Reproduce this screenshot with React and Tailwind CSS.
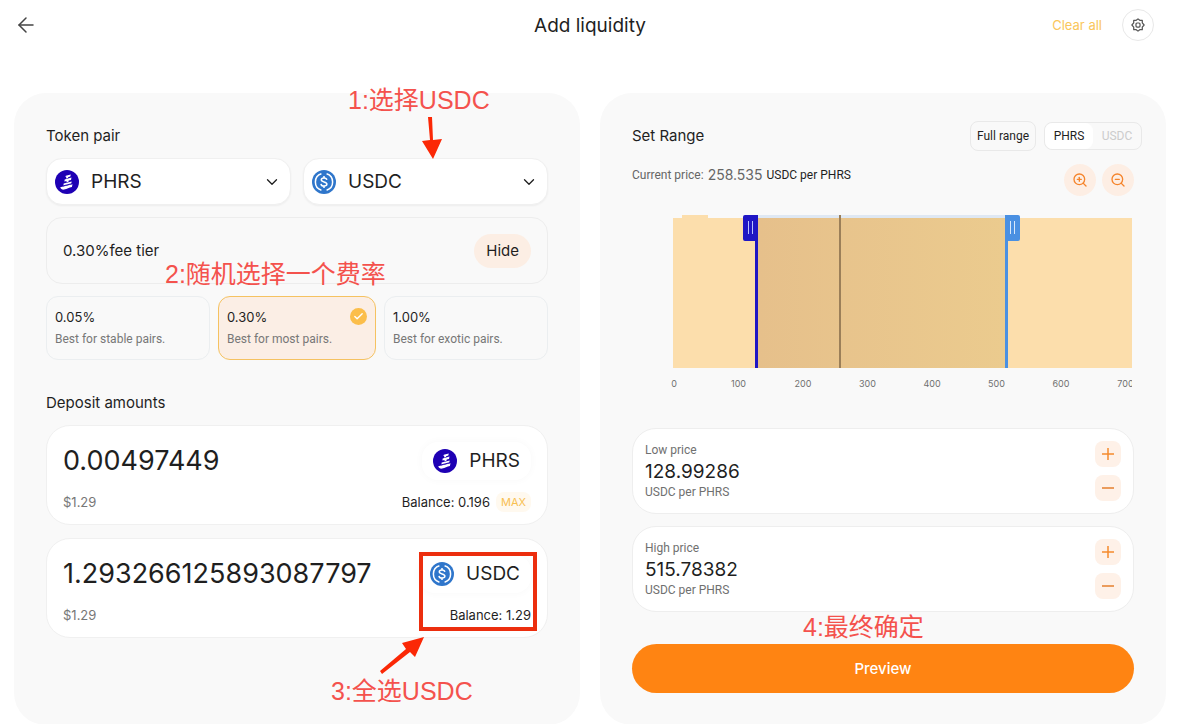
import { useState } from "react";
import { ArrowLeft, Check, ChevronDown, ZoomIn, ZoomOut } from "lucide-react";

const FEES = [
  { value: "0.05%", desc: "Best for stable pairs." },
  { value: "0.30%", desc: "Best for most pairs." },
  { value: "1.00%", desc: "Best for exotic pairs." },
];

const TICKS = [0, 100, 200, 300, 400, 500, 600, 700];

const PhrsIcon = () => (
  <svg viewBox="0 0 24 24" className="size-6 shrink-0" aria-hidden="true">
    <circle cx="12" cy="12" r="12" fill="#1e00b4" />
    <g fill="#fff">
      <path d="M10.800 5.700l5-1.300-.5 2.200-2.200.6-.1.900-2 .5.300-1.800-.9.200z" />
      <path d="M9.700 9.400l6.800-1.800-.5 2.300-2.300.6-.2 1.300-2.100.5.200-1.200-2.200.5z" />
      <path d="M8.700 13.500l8-2-.5 2.400-7.900 2z" />
      <path d="M5.200 17.200l12.300-3-.6 2.800c-2.800.2-4.800 2-7.800 2.600-1.700.3-3.400-.6-3.900-2.400z" />
    </g>
    <path d="M8 15.900l9.500-2.400" stroke="#1e00b4" strokeWidth="0.900" />
  </svg>
);

const UsdcIcon = () => (
  <svg viewBox="0 0 24 24" className="size-6 shrink-0" aria-hidden="true">
    <circle cx="12" cy="12" r="12" fill="#2f76cb" />
    <g fill="none" stroke="#fff" strokeWidth="1.5">
      <path d="M9.400 3.800a8.600 8.600 0 0 0 0 16.400" />
      <path d="M14.600 3.800a8.600 8.600 0 0 1 0 16.400" />
      <path d="M14.800 9.900c-.1-1.300-1.200-2-2.800-2s-2.700.7-2.700 1.900c0 2.900 5.600 1.300 5.600 4.300 0 1.300-1.200 2-2.900 2s-2.900-.8-3-2.200" />
      <path d="M12 6v2M12 16v2" />
    </g>
  </svg>
);

const GearIcon = () => (
  <svg viewBox="0 0 16 16" className="size-3.5" fill="none" stroke="#555" strokeWidth="1.400" strokeLinejoin="round" aria-hidden="true">
    <path d="M8 1l2 1.600h2.900v2.900L15 8l-2.100 2.500v2.900H10L8 15l-2-1.600H3.100v-2.900L1 8l2.100-2.500V2.600H6z" />
    <rect x="5.700" y="5.700" width="4.600" height="4.600" rx="1.200" />
  </svg>
);

const TokenIcon = ({ token }) => (token === "PHRS" ? <PhrsIcon /> : <UsdcIcon />);

const TokenSelect = ({ label, initial }) => {
  const [token, setToken] = useState(initial);

  return (
    <div className="relative flex h-[47px] flex-1 items-center rounded-2xl border border-[#f0f0f0] bg-white pl-2 shadow-xs">
      <TokenIcon token={token} />
      <select
        aria-label={label}
        value={token}
        onChange={(e) => setToken(e.target.value)}
        className="h-full min-w-0 flex-1 appearance-none bg-transparent pt-0.5 pl-3 text-[19px] outline-none"
      >
        <option>PHRS</option>
        <option>USDC</option>
      </select>
      <ChevronDown size={18} strokeWidth={1.75} className="pointer-events-none absolute right-[9px]" />
    </div>
  );
};

const DepositCard = ({ token, initial, balance, max }) => {
  const [amount, setAmount] = useState(initial);

  return (
    <div className="flex h-[100px] flex-col justify-between rounded-3xl border border-[#f0f0f0] bg-white px-4 pt-4 pb-3">
      <div className="flex items-center justify-between">
        <input
          aria-label={`${token} amount`}
          value={amount}
          onChange={(e) => setAmount(e.target.value)}
          className="min-w-0 flex-1 bg-transparent text-[27px] leading-9 outline-none"
        />
        <button className="flex h-[38px] items-center gap-3 rounded-2xl px-[11px] text-[19px] shadow-[0_0_8px_rgba(0,0,0,0.03)]">
          <TokenIcon token={token} />
          {token}
        </button>
      </div>
      <div className="flex items-center justify-between text-[13px] leading-5">
        <span className="text-[#777]">$1.29</span>
        <div className="flex items-center gap-1.5">
          <span>Balance: {balance}</span>
          {max && <button className="rounded-lg bg-[#fff9ef] px-[5px] text-[11px] text-[#f8c052]">MAX</button>}
        </div>
      </div>
    </div>
  );
};

const PriceCard = ({ label, initial }) => {
  const [price, setPrice] = useState(initial);
  const step = (d) => setPrice((p) => (Number(p) + d).toFixed(5));

  return (
    <div className="flex h-[86px] items-center justify-between rounded-3xl border border-[#eee] bg-white px-3">
      <div className="flex flex-1 flex-col pb-[3px] font-['Roboto',sans-serif] text-xs text-[#707070]">
        <label htmlFor={label}>{label}</label>
        <input
          id={label}
          value={price}
          onChange={(e) => setPrice(e.target.value)}
          className="w-full bg-transparent font-['Inter',sans-serif] text-[19px] leading-7 text-[#1f1f1f] outline-none"
        />
        <span className="leading-3">USDC per PHRS</span>
      </div>
      <div className="flex flex-col gap-2">
        <button aria-label={`Increase ${label}`} onClick={() => step(1)} className="flex size-[26px] items-center justify-center rounded-lg bg-[#fef1e8]">
          <svg viewBox="0 0 12 12" className="size-3" stroke="#f58a2c" strokeWidth="1.500"><path d="M0 6h12M6 0v12" /></svg>
        </button>
        <button aria-label={`Decrease ${label}`} onClick={() => step(-1)} className="flex size-[26px] items-center justify-center rounded-lg bg-[#fef1e8]">
          <svg viewBox="0 0 12 12" className="size-3" stroke="#eb9c5c" strokeWidth="2"><path d="M0 6h12" /></svg>
        </button>
      </div>
    </div>
  );
};

const RangeChart = () => (
  <svg viewBox="0 0 502 184" className="w-full" role="img" aria-label="Liquidity range">
    <defs>
      <linearGradient id="range">
        <stop offset="0" stopColor="#e6c08b" />
        <stop offset="1" stopColor="#ebcb8e" />
      </linearGradient>
      <clipPath id="plot">
        <rect x="0" y="0" width="500" height="184" />
      </clipPath>
    </defs>
    <rect x="41" y="10" width="459" height="150" fill="#fcdeac" />
    <rect x="50" y="7" width="26" height="3" fill="#fcdeac" />
    <rect x="126" y="7" width="248" height="4" fill="#dfe8f3" />
    <rect x="126" y="10" width="248" height="150" fill="url(#range)" />
    <rect x="207" y="7" width="2" height="153" fill="#9b7f59" />
    <path d="M126 160h-3V33h-10a2 2 0 0 1-2-2V9a2 2 0 0 1 2-2h13z" fill="#1f16c4" />
    <path d="M116.500 13v13M120.500 13v13" stroke="#b9c0ff" strokeWidth="1" />
    <path d="M373 160h3V33h10a2 2 0 0 0 2-2V9a2 2 0 0 0-2-2h-13z" fill="#4a90e2" />
    <path d="M378.500 13v13M382.500 13v13" stroke="#d8e8fb" strokeWidth="1" />
    <g clipPath="url(#plot)" fill="#707070" fontSize="9" textAnchor="middle">
      {TICKS.map((tick, i) => (
        <text key={tick} x={42 + i * 64.5} y="179">{tick}</text>
      ))}
    </g>
  </svg>
);

// Red tutorial notes drawn above the form
const Note = ({ className, children }) => (
  <span className={`pointer-events-none absolute z-10 font-['Liberation_Sans','Noto_Sans_CJK_SC',sans-serif] text-[25px] leading-7 whitespace-nowrap text-[#f4524d] ${className}`}>
    {children}
  </span>
);

const App = () => {
  const [fee, setFee] = useState("0.30%");
  const [base, setBase] = useState("PHRS");

  return (
    <main className="bg-white pr-9 pl-3.5 font-['Inter',sans-serif] text-[#1f1f1f]">
      <header className="grid h-[50px] grid-cols-[1fr_auto_1fr] items-center">
        <button aria-label="Back" className="w-6 text-[#444]">
          <ArrowLeft size={24} strokeWidth={1.5} />
        </button>
        <h1 className="pt-0.5 text-[19px]">Add liquidity</h1>
        <div className="mr-3 flex items-center justify-end gap-5">
          <button className="pt-0.5 text-[13px] text-[#fac65b]">Clear all</button>
          <button aria-label="Settings" className="flex size-8 items-center justify-center rounded-full border border-[#e8e8e8]">
            <GearIcon />
          </button>
        </div>
      </header>

      <div className="mt-[43px] grid grid-cols-2 gap-5">
        <section className="relative rounded-[32px] bg-[#f9f9f9] px-8 pt-[31px]">
          <h2 className="text-[15px] leading-6">Token pair</h2>
          <div className="mt-2.5 flex gap-3">
            <TokenSelect label="First token" initial="PHRS" />
            <TokenSelect label="Second token" initial="USDC" />
          </div>

          <div className="mt-3 flex h-[67px] items-center justify-between rounded-2xl border border-[#ededed] px-4">
            <span className="pt-0.5 text-[15px]">{fee}fee tier</span>
            <button className="h-[34px] rounded-full bg-[#fceee4] px-3 pt-0.5 text-[15px]">Hide</button>
          </div>

          <div className="mt-3 grid grid-cols-[1fr_158px_1fr] gap-2">
            {FEES.map((item) => (
              <button
                key={item.value}
                onClick={() => setFee(item.value)}
                className={`relative flex h-16 flex-col justify-center gap-1 rounded-xl border px-2 pb-0.5 text-left ${
                  fee === item.value ? "border-[#f5c261] bg-[#fbeee5]" : "border-[#ebeef0]"
                }`}
              >
                <span className="text-[13px] leading-5">{item.value}</span>
                <span className="font-['Roboto',sans-serif] text-xs text-[#777]">{item.desc}</span>
                {fee === item.value && (
                  <span className="absolute top-[11px] right-2 flex size-[17px] items-center justify-center rounded-full bg-[#fbbe4b] text-white">
                    <Check size={11} strokeWidth={3} />
                  </span>
                )}
              </button>
            ))}
          </div>

          <h2 className="mt-[31px] text-[15px] leading-6">Deposit amounts</h2>
          <div className="mt-2.5 flex flex-col gap-[13px]">
            <DepositCard token="PHRS" initial="0.00497449" balance="0.196" max />
            <DepositCard token="USDC" initial="1.293266125893087797" balance="1.29" />
          </div>

          <Note className="top-[-7px] left-[334px]">1:选择USDC</Note>
          <Note className="top-[167px] left-[151px]">2:随机选择一个费率</Note>
          <Note className="top-[584px] left-[317px]">3:全选USDC</Note>
          <svg viewBox="0 0 20 42" className="pointer-events-none absolute top-6 left-[408px] h-[42px] w-5" aria-hidden="true">
            <path d="M6 0h4l1 23 9-1-9 20L0 24l8-1z" fill="#fb2806" />
          </svg>
          <svg viewBox="0 0 44 37" className="pointer-events-none absolute top-[544px] left-[366px] h-[37px] w-11" aria-hidden="true">
            <path d="M0 34L26 12l-4-6L44 0 35 20l-5-5L2 37z" fill="#fb2806" />
          </svg>
          <span className="pointer-events-none absolute top-[459px] right-[43px] h-[79px] w-[118px] border-4 border-[#ec2e0e]" />
        </section>

        <section className="relative rounded-[32px] bg-[#f9f9f9] px-8 pt-7 pb-8">
          <div className="-mr-2 flex h-[30px] items-center gap-2 font-['Roboto',sans-serif] text-xs">
            <h2 className="mr-auto font-['Inter',sans-serif] text-[15px]">Set Range</h2>
            <button className="h-[30px] rounded-lg border border-[#e9e9e9] px-1.5">Full range</button>
            <div className="flex h-7 w-[98px] rounded-lg border border-[#e9e9e9]">
              {["PHRS", "USDC"].map((token) => (
                <button
                  key={token}
                  onClick={() => setBase(token)}
                  className={`flex-1 rounded-lg ${base === token ? "bg-white" : "text-[#ccc]"}`}
                >
                  {token}
                </button>
              ))}
            </div>
          </div>

          <div className="mt-3 flex items-start justify-between">
            <p className="flex items-center gap-1 font-['Roboto',sans-serif] text-xs leading-6">
              <span className="text-[#666]">Current price:</span>
              <span className="font-['Inter',sans-serif] text-[14px] text-[#666]">258.535</span>
              <span>USDC per PHRS</span>
            </p>
            <div className="mt-px flex gap-1.5 text-[#f5842b]">
              <button aria-label="Zoom in" className="flex size-8 items-center justify-center rounded-full bg-[#fdeee4]">
                <ZoomIn size={16} strokeWidth={2} />
              </button>
              <button aria-label="Zoom out" className="flex size-8 items-center justify-center rounded-full bg-[#fdeee4]">
                <ZoomOut size={16} strokeWidth={2} />
              </button>
            </div>
          </div>

          <div className="mt-3">
            <RangeChart />
          </div>

          <div className="mt-9 flex flex-col gap-3">
            <PriceCard label="Low price" initial="128.99286" />
            <PriceCard label="High price" initial="515.78382" />
          </div>

          <div className="relative mt-8">
            <Note className="top-[-31px] left-[171px]">4:最终确定</Note>
            <button className="h-[49px] w-full rounded-full bg-[#ff8412] pt-0.5 text-[15px] font-medium text-white">Preview</button>
          </div>
        </section>
      </div>
    </main>
  );
};

export default App;
